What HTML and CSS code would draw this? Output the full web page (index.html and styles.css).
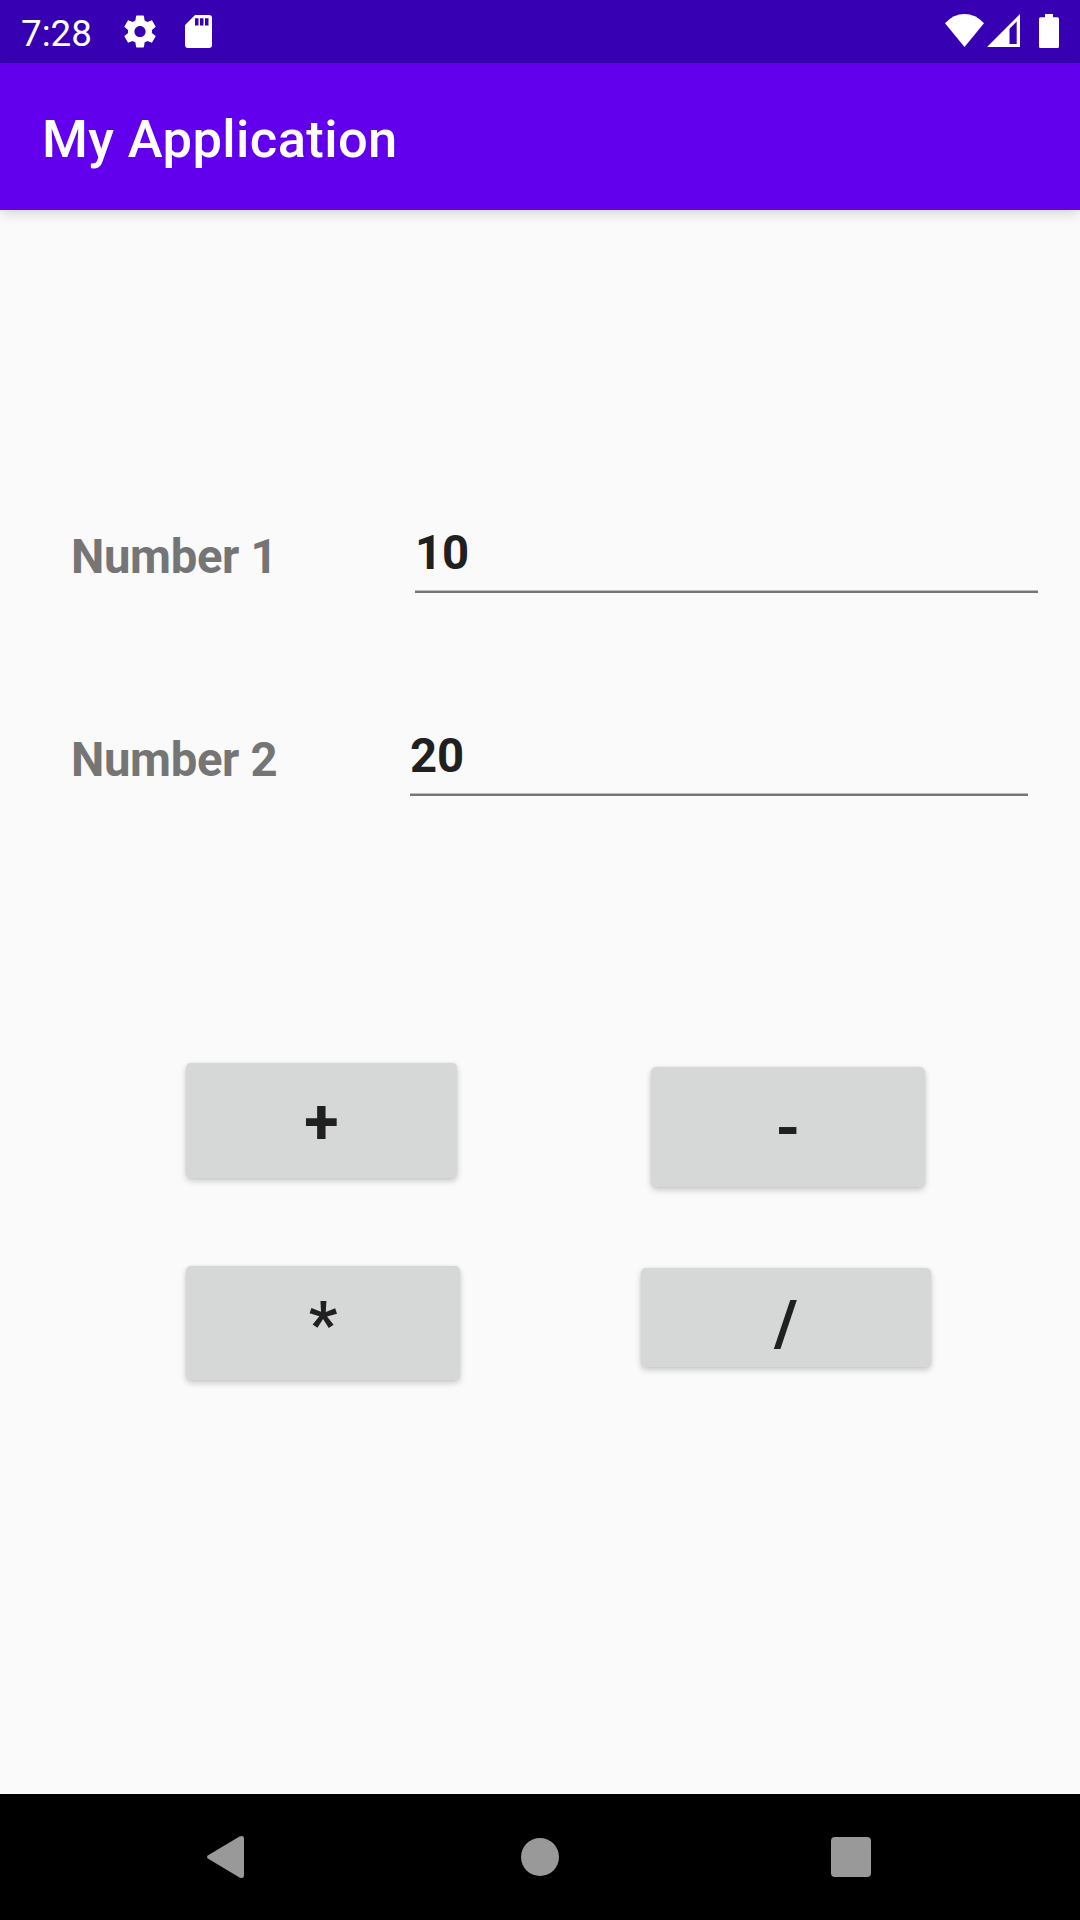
FILE: index.html
```html
<!DOCTYPE html>
<html lang="en">
<head>
<meta charset="utf-8">
<title>My Application</title>
<link rel="stylesheet" href="styles.css">
</head>
<body>
<div class="screen">
  <div class="status-bar">
    <span class="clock">7:28</span>
    <svg class="icon-gear" viewBox="2 2 20 20"><path d="M19.43 12.98c.04-.32.07-.64.07-.98s-.03-.66-.07-.98l2.11-1.65c.19-.15.24-.42.12-.64l-2-3.46c-.12-.22-.39-.3-.61-.22l-2.49 1c-.52-.4-1.08-.73-1.69-.98l-.38-2.65C14.46 2.18 14.25 2 14 2h-4c-.25 0-.46.18-.49.42l-.38 2.65c-.61.25-1.17.59-1.69.98l-2.49-1c-.23-.09-.49 0-.61.22l-2 3.46c-.13.22-.07.49.12.64l2.11 1.65c-.04.32-.07.65-.07.98s.03.66.07.98l-2.11 1.65c-.19.15-.24.42-.12.64l2 3.46c.12.22.39.3.61.22l2.49-1c.52.4 1.08.73 1.69.98l.38 2.65c.03.24.24.42.49.42h4c.25 0 .46-.18.49-.42l.38-2.65c.61-.25 1.17-.59 1.69-.98l2.49 1c.23.09.49 0 .61-.22l2-3.46c.12-.22.07-.49-.12-.64l-2.11-1.65zM12 15.5c-1.93 0-3.5-1.57-3.5-3.5s1.57-3.5 3.5-3.5 3.5 1.57 3.5 3.5-1.57 3.5-3.5 3.5z"/></svg>
    <svg class="icon-sd" viewBox="0 0 27 33"><path fill-rule="evenodd" d="M10 0h14a3 3 0 0 1 3 3v27a3 3 0 0 1-3 3H3a3 3 0 0 1-3-3V10zM10 3.300v7.200h3.500v-7.200zM15 3.300v7.200h3.500v-7.200zM20 3.300v7.200h3.500v-7.200z"/></svg>
    <div class="system-icons">
      <svg class="icon-wifi" viewBox="0 0 39 33"><path d="M19.500 33 0 9.200Q8.500 0 19.500 0T39 9.200z"/></svg>
      <svg class="icon-signal" viewBox="0 0 33 33"><path fill-rule="evenodd" d="M33 0v33H0zM29.700 7.500l-7.200 7.300v15.200h7.200z"/></svg>
      <svg class="icon-battery" viewBox="0 0 20 34"><path d="M6 0h8v3.300h4.500a1.500 1.500 0 0 1 1.500 1.500v27.700a1.500 1.500 0 0 1-1.500 1.500h-17a1.500 1.500 0 0 1-1.500-1.500V4.800a1.500 1.500 0 0 1 1.500-1.500H6z"/></svg>
    </div>
  </div>
  <header class="app-bar"><h1 class="title">My Application</h1></header>
  <main class="content">
    <div class="fields">
      <div class="field-row">
        <label class="label" for="n1">Number 1</label>
        <input class="field field-one" id="n1" type="text" value="10">
      </div>
      <div class="field-row">
        <label class="label" for="n2">Number 2</label>
        <input class="field field-two" id="n2" type="text" value="20">
      </div>
    </div>
    <div class="operations">
      <div class="operation-column">
        <button class="operation add">+</button>
        <button class="operation multiply">*</button>
      </div>
      <div class="operation-column column-right">
        <button class="operation subtract">-</button>
        <button class="operation divide">/</button>
      </div>
    </div>
  </main>
  <nav class="nav-bar">
    <svg class="nav-back" viewBox="0 0 37 42"><path d="M1.200 19.200 32.500.6Q37-1.200 37 3v36q0 4.200-4.500 2.400L1.200 22.800Q-1.200 21 1.200 19.200z"/></svg>
    <svg class="nav-home" viewBox="0 0 38 38"><circle cx="19" cy="19" r="19"/></svg>
    <svg class="nav-recent" viewBox="0 0 40 40"><rect width="40" height="40" rx="4"/></svg>
  </nav>
</div>
</body>
</html>
```
FILE: styles.css
```css
* {
  box-sizing: border-box;
}

body {
  margin: 0;
  font-family: Roboto, sans-serif;
  background: #fafafa;
}

svg {
  display: block;
  flex: none;
}

.screen {
  display: flex;
  flex-direction: column;
  width: 1080px;
  height: 1920px;
  overflow: hidden;
}

.status-bar {
  display: flex;
  align-items: flex-start;
  height: 63px;
  padding: 14px 21px 0 21px;
  background: #3700b3;
  color: #fff;
  fill: #fff;
}

.clock {
  width: 103px;
  font-size: 36.75px;
  line-height: 39px;
}

.icon-gear {
  width: 32px;
  height: 33px;
  margin: 1px 29px 0 0;
}

.icon-sd {
  width: 27px;
  height: 33px;
  margin-top: 1px;
}

.system-icons {
  display: flex;
  margin-left: auto;
}

.icon-wifi {
  width: 39px;
  height: 33px;
  margin-right: 3px;
}

.icon-signal {
  width: 33px;
  height: 33px;
  margin-right: 19px;
}

.icon-battery {
  width: 20px;
  height: 34px;
}

.app-bar {
  position: relative;
  height: 147px;
  padding: 45px 42px 0;
  background: #6200ee;
  box-shadow: 0 3px 12px rgba(0, 0, 0, 0.16);
}

.title {
  margin: 0;
  color: #fff;
  font-size: 52.5px;
  font-weight: 500;
  letter-spacing: 0.38px;
  line-height: 62px;
}

.content {
  flex: 1;
  padding-top: 315px;
}

.fields {
  display: grid;
  gap: 135px;
  padding-left: 71px;
}

.field-row {
  display: flex;
  height: 68px;
}

.label {
  width: 339px;
  padding-top: 4px;
  color: #757575;
  font-size: 47.25px;
  font-weight: 700;
  letter-spacing: -0.35px;
  line-height: 56px;
}

.field {
  height: 68px;
  padding: 0 0 12px;
  border: 0;
  outline: 0;
  background: linear-gradient(#bcbcbc 1px, #757575 1px) left bottom / 100% 3px no-repeat;
  color: #202020;
  font: 700 47.25px/56px Roboto, sans-serif;
}

.field-one {
  width: 623px;
  margin-left: 5px;
}

.field-two {
  width: 618px;
}

.operations {
  display: flex;
  justify-content: space-between;
  padding: 267px 149px 0 186px;
}

.operation-column {
  display: flex;
  flex-direction: column;
  align-items: flex-start;
  gap: 88px;
}

.column-right {
  align-items: center;
  gap: 81px;
  padding-top: 4px;
}

.operation {
  padding: 0;
  border: 0;
  border-radius: 5px;
  background: #d6d8d7;
  box-shadow: 0 3px 6px rgba(0, 0, 0, 0.2), 0 0 3px rgba(0, 0, 0, 0.06);
  color: #202020;
  font: 700 63px/74px Roboto, sans-serif;
}

.add {
  width: 271px;
  height: 115px;
  padding-top: 3px;
}

.subtract {
  width: 274px;
  height: 120px;
  margin-left: 4px;
  padding-top: 4px;
}

.multiply {
  width: 274px;
  height: 114px;
  padding-top: 4px;
}

.divide {
  width: 290px;
  height: 99px;
  padding-top: 12px;
}

.nav-bar {
  display: flex;
  align-items: center;
  height: 126px;
  padding: 0 209px 0 207px;
  background: #000;
  fill: #999;
}

.nav-back {
  width: 37px;
  height: 42px;
}

.nav-home {
  width: 38px;
  height: 38px;
  margin: 0 272px 0 277px;
}

.nav-recent {
  width: 40px;
  height: 40px;
}
```
